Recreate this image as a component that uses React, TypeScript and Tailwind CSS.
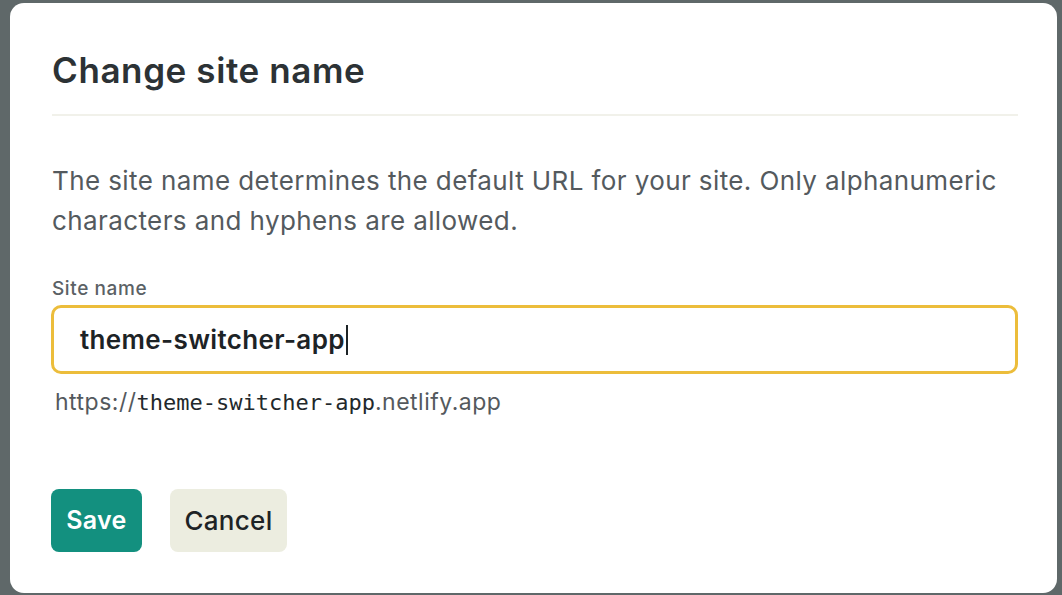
export default function App() {
  return (
    <div
      className="h-[595px] w-[1062px] overflow-hidden bg-[#5f6869] pb-[2px] pl-[10px] pr-[5px] pt-[3px]"
      style={{ fontFamily: "Inter, 'Noto Sans', sans-serif" }}
    >
      <div className="flex h-full flex-col rounded-[14px] bg-white pl-[42px] pr-[39px]">
        <h2 className="mt-[45px] text-[35px] font-semibold leading-[44px] tracking-[0.6px] text-[#2c3235]">
          Change site name
        </h2>
        <div className="mt-[22px] h-[2px] bg-[#f1f1ea]" />

        <p className="mt-[45px] text-[26px] leading-[40px] tracking-[0.4px] text-[#545a5e]">
          The site name determines the default URL for your site. Only alphanumeric characters and hyphens are allowed.
        </p>

        <label className="mt-[36px] text-[19px] font-medium leading-[24px] tracking-[0.6px] text-[#5b6165]">
          Site name
        </label>
        <div className="-ml-[1px] mt-[4px] flex h-[69px] items-center rounded-[10px] border-[3px] border-[#ecbd3b] pl-[26px]">
          <span className="text-[26px] font-semibold tracking-[0.35px] text-[#1d2326]">theme-switcher-app</span>
          <span className="ml-[1px] h-[30px] w-[2px] bg-[#1d2326]" />
        </div>

        <div className="ml-[3px] mt-[12px] text-[23px] leading-[32px] tracking-[0.5px] text-[#54595d]">
          https://
          <span
            className="text-[22px] tracking-normal text-[#22282b]"
            style={{ fontFamily: "'DejaVu Sans Mono', monospace" }}
          >
            theme-switcher-app
          </span>
          .netlify.app
        </div>

        <div className="mt-[70px] flex gap-[28px]">
          <button className="-ml-[1px] h-[63px] w-[91px] rounded-[8px] bg-[#13907f] text-[25px] font-semibold tracking-[0.3px] text-white">
            Save
          </button>
          <button className="h-[63px] w-[117px] rounded-[8px] bg-[#ecede0] text-[26px] font-medium tracking-[0.3px] text-[#1d2326]">
            Cancel
          </button>
        </div>
      </div>
    </div>
  );
}
